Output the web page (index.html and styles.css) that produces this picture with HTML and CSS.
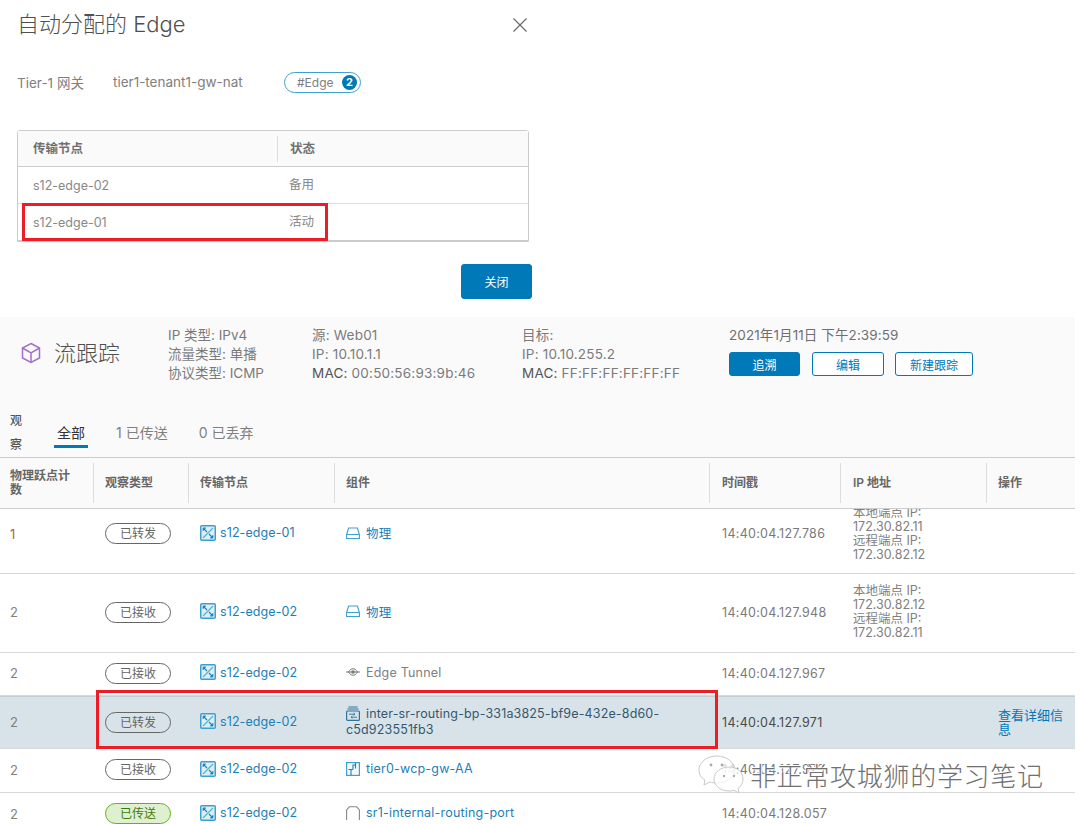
FILE: index.html
```html
<!DOCTYPE html>
<html lang="zh-CN">
<head>
<meta charset="utf-8">
<title>流跟踪</title>
<link rel="stylesheet" href="styles.css">
</head>
<body>
<svg class="defs" width="0" height="0" aria-hidden="true">
  <symbol id="node" viewBox="0 0 16 16">
    <rect x=".75" y=".75" width="14.5" height="14.5" rx="1" fill="#dceef6" stroke="#3f9fd0" stroke-width="1.5"/>
    <path d="M3 13 13 3" fill="none" stroke="#58b2da" stroke-width="1.3"/>
    <path d="M3.2 3.2 7 7M3.2 3.2h2.6M3.2 3.2v2.6M12.8 12.8 9 9M12.8 12.8h-2.6M12.8 12.8v-2.6" fill="none" stroke="#1c80b8" stroke-width="1.2"/>
  </symbol>
  <symbol id="phys" viewBox="0 0 14 12">
    <path d="M.6 7.5 2.6 1h8.8l2 6.5v4H.6zM.6 7.5h12.8" fill="none" stroke="#3f9fd0" stroke-width="1.1"/>
  </symbol>
  <symbol id="tunnel" viewBox="0 0 14 8">
    <path d="M0 4h14M2.5 4C4 1.4 5.5.8 7 .8s3 .6 4.500 3.200C10 6.600 8.500 7.200 7 7.200S4 6.600 2.500 4z" fill="none" stroke="#777" stroke-width="1"/>
    <circle cx="7" cy="4" r="1.800" fill="#777"/>
  </symbol>
  <symbol id="seg" viewBox="0 0 14 15">
    <path d="M2.500 1h9M1.500 3h11" fill="none" stroke="#2f7298" stroke-width="1"/>
    <rect x=".6" y="5" width="12.800" height="9.400" rx="1" fill="none" stroke="#2f7298" stroke-width="1.200"/>
    <path d="M3 8.200h6M7.600 7l1.400 1.200-1.400 1.200M11 11.200H5M6.400 10 5 11.200l1.400 1.200" fill="none" stroke="#2f7298" stroke-width=".9"/>
  </symbol>
  <symbol id="router" viewBox="0 0 14 14">
    <rect x=".6" y=".6" width="12.800" height="12.800" fill="#f2f9fc" stroke="#3f9fd0" stroke-width="1.200"/>
    <path d="M2.500 7.500H7M5 7.500V13M7 7.500V3h2.500M9.500 1v5.500" fill="none" stroke="#1c80b8" stroke-width="1.100"/>
  </symbol>
  <symbol id="port" viewBox="0 0 14 14">
    <path d="M.6 14V4L3.400.8h7.200L13.400 4v10" fill="none" stroke="#888" stroke-width="1.100"/>
  </symbol>
</svg>

<main class="page">
  <section class="dialog">
    <header class="dialog-head">
      <h1 class="dialog-title">自动分配的 Edge</h1>
      <svg class="close" width="16" height="16" viewBox="0 0 16 16" aria-label="关闭"><path d="M1.500 1.500l13 13M14.500 1.500l-13 13" fill="none" stroke="#6a6a6a" stroke-width="1.200"/></svg>
    </header>
    <div class="meta">
      <span class="meta-label">Tier-1 网关</span>
      <span class="meta-value">tier1-tenant1-gw-nat</span>
      <span class="edge-badge">#Edge<b class="count">2</b></span>
    </div>
    <div class="mini-table">
      <div class="mini-row mini-head"><span class="mini-a">传输节点</span><span class="mini-b">状态</span></div>
      <div class="mini-row"><span class="mini-a">s12-edge-02</span><span class="mini-b">备用</span></div>
      <div class="mini-row"><span class="mini-a">s12-edge-01</span><span class="mini-b">活动</span></div>
      <i class="mark mark-a"></i>
    </div>
    <div class="dialog-foot"><button class="btn btn-solid btn-close">关闭</button></div>
  </section>

  <section class="trace">
    <div class="trace-top">
      <div class="trace-name">
        <svg class="cube" width="20" height="22" viewBox="0 0 20 22"><path d="M10 1.500 18.500 6v10L10 20.500 1.500 16V6zM1.500 6 10 10.800 18.500 6M10 10.800v9.700" fill="none" stroke="#a36fcb" stroke-width="1.500"/></svg>
        <h2 class="trace-title">流跟踪</h2>
      </div>
      <div class="info info-a">IP 类型: IPv4<br>流量类型: 单播<br>协议类型: ICMP</div>
      <div class="info info-b">源: Web01<br>IP: 10.10.1.1<br><b>MAC:</b> 00:50:56:93:9b:46</div>
      <div class="info info-c">目标:<br>IP: 10.10.255.2<br><b>MAC:</b> FF:FF:FF:FF:FF:FF</div>
      <div class="actions">
        <div class="stamp">2021年1月11日 下午2:39:59</div>
        <div class="btns">
          <button class="btn btn-solid btn-s1">追溯</button>
          <button class="btn btn-line btn-s2">编辑</button>
          <button class="btn btn-line btn-s3">新建跟踪</button>
        </div>
      </div>
    </div>
    <div class="tabs">
      <span class="tabs-label">观察</span>
      <span class="tab tab-on">全部</span>
      <span class="tab">1 已传送</span>
      <span class="tab">0 已丢弃</span>
    </div>
    <div class="grid-head row">
      <span class="cell">物理跃点计数</span>
      <span class="cell">观察类型</span>
      <span class="cell">传输节点</span>
      <span class="cell">组件</span>
      <span class="cell">时间戳</span>
      <span class="cell">IP 地址</span>
      <span class="cell">操作</span>
    </div>
  </section>

  <section class="grid-body">
    <div class="row r-tall r-first">
      <span class="cell hop hop-o">1</span>
      <span class="cell"><span class="pill">已转发</span></span>
      <span class="cell"><a class="link"><svg class="ic-node"><use href="#node"/></svg>s12-edge-01</a></span>
      <span class="cell"><a class="link comp"><svg class="ic-c"><use href="#phys"/></svg>物理</a></span>
      <span class="cell time">14:40:04.127.786</span>
      <span class="cell ips">本地端点 IP:<br>172.30.82.11<br>远程端点 IP:<br>172.30.82.12</span>
      <span class="cell"></span>
    </div>
    <div class="row r-tall">
      <span class="cell hop">2</span>
      <span class="cell"><span class="pill">已接收</span></span>
      <span class="cell"><a class="link"><svg class="ic-node"><use href="#node"/></svg>s12-edge-02</a></span>
      <span class="cell"><a class="link comp"><svg class="ic-c"><use href="#phys"/></svg>物理</a></span>
      <span class="cell time">14:40:04.127.948</span>
      <span class="cell ips">本地端点 IP:<br>172.30.82.12<br>远程端点 IP:<br>172.30.82.11</span>
      <span class="cell"></span>
    </div>
    <div class="row r-43">
      <span class="cell hop">2</span>
      <span class="cell"><span class="pill">已接收</span></span>
      <span class="cell"><a class="link"><svg class="ic-node"><use href="#node"/></svg>s12-edge-02</a></span>
      <span class="cell"><span class="plain comp"><svg class="ic-t"><use href="#tunnel"/></svg>Edge Tunnel</span></span>
      <span class="cell time">14:40:04.127.967</span>
      <span class="cell"></span>
      <span class="cell"></span>
    </div>
    <div class="row r-sel">
      <span class="cell hop">2</span>
      <span class="cell"><span class="pill">已转发</span></span>
      <span class="cell"><a class="link"><svg class="ic-node"><use href="#node"/></svg>s12-edge-02</a></span>
      <span class="cell seg"><svg class="ic-s"><use href="#seg"/></svg>inter-sr-routing-bp-331a3825-bf9e-432e-8d60-c5d923551fb3</span>
      <span class="cell time">14:40:04.127.971</span>
      <span class="cell"></span>
      <span class="cell"><a class="detail">查看详细信息</a></span>
    </div>
    <div class="row r-44">
      <span class="cell hop">2</span>
      <span class="cell"><span class="pill">已接收</span></span>
      <span class="cell"><a class="link"><svg class="ic-node"><use href="#node"/></svg>s12-edge-02</a></span>
      <span class="cell"><a class="link comp"><svg class="ic-c"><use href="#router"/></svg>tier0-wcp-gw-AA</a></span>
      <span class="cell time">14:40:04.127.979</span>
      <span class="cell"></span>
      <span class="cell"></span>
    </div>
    <div class="row r-44">
      <span class="cell hop">2</span>
      <span class="cell"><span class="pill pill-ok">已传送</span></span>
      <span class="cell"><a class="link"><svg class="ic-node"><use href="#node"/></svg>s12-edge-02</a></span>
      <span class="cell"><a class="link comp"><svg class="ic-c"><use href="#port"/></svg>sr1-internal-routing-port</a></span>
      <span class="cell time">14:40:04.128.057</span>
      <span class="cell"></span>
      <span class="cell"></span>
    </div>
  </section>

  <i class="mark mark-b"></i>
  <div class="watermark">
    <svg class="wechat" width="50" height="40" viewBox="0 0 50 40"><g fill="rgba(255,255,255,.7)" stroke="#c9c9c9" stroke-width="1"><path d="M20 2C10 2 2 8 2 16c0 4 2 8 6 10l-1 5 6-3c2 .6 4 1 7 1 10 0 18-6 18-13S30 2 20 2z"/><path d="M32 13c-8 0-15 5-15 12s7 12 15 12c2 0 3 0 5-.6l5 2.600-1-4.500c3-2 5-6 5-9.500 0-7-6-12-14-12z"/></g><g fill="#aaa"><circle cx="14" cy="11" r="1.400"/><circle cx="25" cy="11" r="1.400"/><circle cx="27" cy="22" r="1.200"/><circle cx="37" cy="22" r="1.200"/></g></svg>
    <span class="wm-text">非正常攻城狮的学习笔记</span>
  </div>
</main>
</body>
</html>
```

FILE: styles.css
```css
* { box-sizing: border-box; }
html, body { margin: 0; height: 824px; overflow: hidden; background: #fff; }
body { font-family: Inter, "Noto Sans CJK SC", sans-serif; font-size: 12.5px; color: #707070; }
.defs { position: absolute; }
.page { position: relative; width: 1075px; height: 824px; overflow: hidden; }

.dialog { height: 317px; padding: 0 0 0 17px; }
.dialog-head { display: flex; align-items: center; justify-content: space-between; height: 50px; padding-right: 548px; }
.dialog-title { margin: 0 0 2px; font-size: 22px; font-weight: 300; color: #4f4f4f; line-height: 48px; }
.close { flex: none; margin-right: -1px; }
.meta { display: flex; align-items: center; height: 22px; margin-top: 21px; font-size: 13.5px; color: #808080; }
.meta-label { width: 96px; }
.meta-value { width: 171px; }
.edge-badge { display: flex; align-items: center; justify-content: space-between; width: 77px; height: 21px; padding: 0 3px 0 12px; border: 1px solid #3f9fd0; border-radius: 11px; font-size: 12px; }
.count { display: flex; align-items: center; justify-content: center; width: 15px; height: 15px; border-radius: 50%; background: #0079b8; color: #fff; font-size: 11px; }

.mini-table { position: relative; width: 512px; margin-top: 37px; border: 1px solid #ccc; border-radius: 3px 3px 0 0; color: #888; }
.mini-row { display: flex; align-items: center; height: 37px; border-bottom: 1px solid #ddd; }
.mini-row:last-of-type { border-bottom-color: #ccc; height: 37px; }
.mini-head { height: 36px; background: #fafafa; font-weight: 600; font-size: 12.5px; color: #707070; border-bottom-color: #ccc; }
.mini-a { width: 259px; padding-left: 15px; }
.mini-b { padding-left: 12px; flex: 1; margin-bottom: 3px; }
.mini-head .mini-b { border-left: 1px solid #ddd; height: 26px; line-height: 26px; margin-bottom: 0; }
.mini-head .mini-a { line-height: 26px; }
.mark { position: absolute; display: block; border: 3px solid #ee1c25; pointer-events: none; }
.mark-a { left: 4px; top: 72px; width: 306px; height: 38px; }
.mark-b { left: 96px; top: 690px; width: 622px; height: 59px; }
.dialog-foot { width: 515px; margin-top: 22px; display: flex; justify-content: flex-end; }

.btn { display: block; padding: 0; border-radius: 3px; font-family: inherit; font-size: 12px; }
.btn-solid { background: #0079b8; border: 1px solid #0079b8; color: #fff; }
.btn-line { background: #fff; border: 1px solid #0079b8; color: #0079b8; }
.btn-close { width: 71px; height: 35px; }
.btn-s1 { width: 71px; }
.btn-s2 { width: 72px; }
.btn-s3 { width: 78px; margin-left: -1px; }

.trace { background: #fafafa; }
.trace-top { display: flex; height: 91px; padding: 9px 0 0 21px; }
.trace-name { display: flex; align-items: center; gap: 13px; width: 147px; height: 54px; }
.cube { flex: none; }
.trace-title { margin: 0 0 4px; font-size: 22px; font-weight: 300; color: #4f4f4f; }
.info { font-size: 13.5px; line-height: 19px; color: #7a7a7a; letter-spacing: .2px; }
.info b { font-weight: 400; color: #555; }
.info-a { width: 144px; letter-spacing: 0; }
.info-b { width: 210px; }
.info-c { width: 207px; }
.stamp { font-size: 13.5px; line-height: 19px; letter-spacing: .1px; }
.btns { display: flex; gap: 12px; margin-top: 7px; }
.btns .btn { height: 24px; }

.tabs { display: flex; align-items: flex-end; height: 50px; border-bottom: 1px solid #ccc; padding-left: 10px; }
.tabs-label { width: 14px; font-size: 12px; line-height: 24px; font-weight: 500; color: #555; }
.tab { height: 32px; margin-left: 25px; margin-bottom: 9px; padding: 0 3px; line-height: 34px; font-size: 14px; color: #808080; }
.tab-on { margin-left: 30px; border-bottom: 3px solid #0079b8; color: #333; }

.row { display: grid; grid-template-columns: 93px 95px 146px 375px 131px 146px 1fr; align-items: center; border-bottom: 1px solid #d8d8d8; }
.cell { padding: 0 12px; min-width: 0; }
.row .cell:first-child { padding-left: 10px; }
.row .cell:nth-child(5), .row .cell:nth-child(6) { padding-left: 13px; }
.grid-head { height: 51px; background: #fafafa; border-bottom: 1px solid #ccc; font-weight: 600; font-size: 12px; color: #666; }
.grid-head .cell { display: flex; align-items: center; height: 40px; line-height: 14px; padding-left: 11px; border-left: 1px solid #ddd; }
.grid-head .cell:nth-child(5), .grid-head .cell:nth-child(6) { padding-left: 12px; }
.grid-head .cell:first-child { border-left: 0; }

.grid-body { height: 315px; overflow: hidden; background: #fff; }
.r-tall { height: 79px; padding-bottom: 2px; }
.r-first { margin-top: -15px; height: 80px; padding-bottom: 0; }
.r-43 { height: 43px; padding-bottom: 2px; }
.r-44 { height: 44px; padding-bottom: 2px; }
.r-sel { height: 53px; background: #d8e3e9; border-top: 1px solid #c4cdd2; color: #4a4a4a; padding-bottom: 1px; }
.hop { font-size: 13px; color: #808080; }
.hop-o { color: #b5651d; }
.time { letter-spacing: .3px; color: #7a7a7a; }
.r-sel .time { color: #4a4a4a; font-weight: 400; }
.ips { line-height: 14px; font-size: 12.5px; color: #808080; }

.pill { display: block; width: 66px; height: 21px; line-height: 19px; border: 1px solid #666; border-radius: 11px; text-align: center; font-size: 12px; color: #666; }
.pill-ok { background: #dff0d0; border-color: #60b515; color: #3f7a0c; }
.link { display: flex; align-items: center; color: #1c80b8; white-space: nowrap; margin-bottom: 2px; letter-spacing: .1px; }
.comp { font-size: 12.5px; letter-spacing: .2px; margin-bottom: 2px; }
.ic-node { flex: none; width: 16px; height: 16px; margin-right: 4px; }
.ic-c { flex: none; width: 14px; height: 14px; margin-right: 6px; }
.ic-t { flex: none; width: 14px; height: 8px; margin-right: 6px; }
.ic-s { width: 14px; height: 15px; margin-right: 6px; vertical-align: -3px; }
.plain { display: flex; align-items: center; color: #808080; }
.seg { line-height: 16px; color: #35586c; letter-spacing: .15px; }
.detail { display: block; color: #0079b8; line-height: 14px; font-size: 13px; }

.watermark { position: absolute; left: 697px; top: 754px; display: flex; align-items: center; gap: 3px; }
.wechat { flex: none; }
.wm-text { font-size: 26px; letter-spacing: .7px; color: #707070; font-weight: 300; text-shadow: 1px 1px 0 #fff, -1px -1px 0 #fff; white-space: nowrap; }
```
